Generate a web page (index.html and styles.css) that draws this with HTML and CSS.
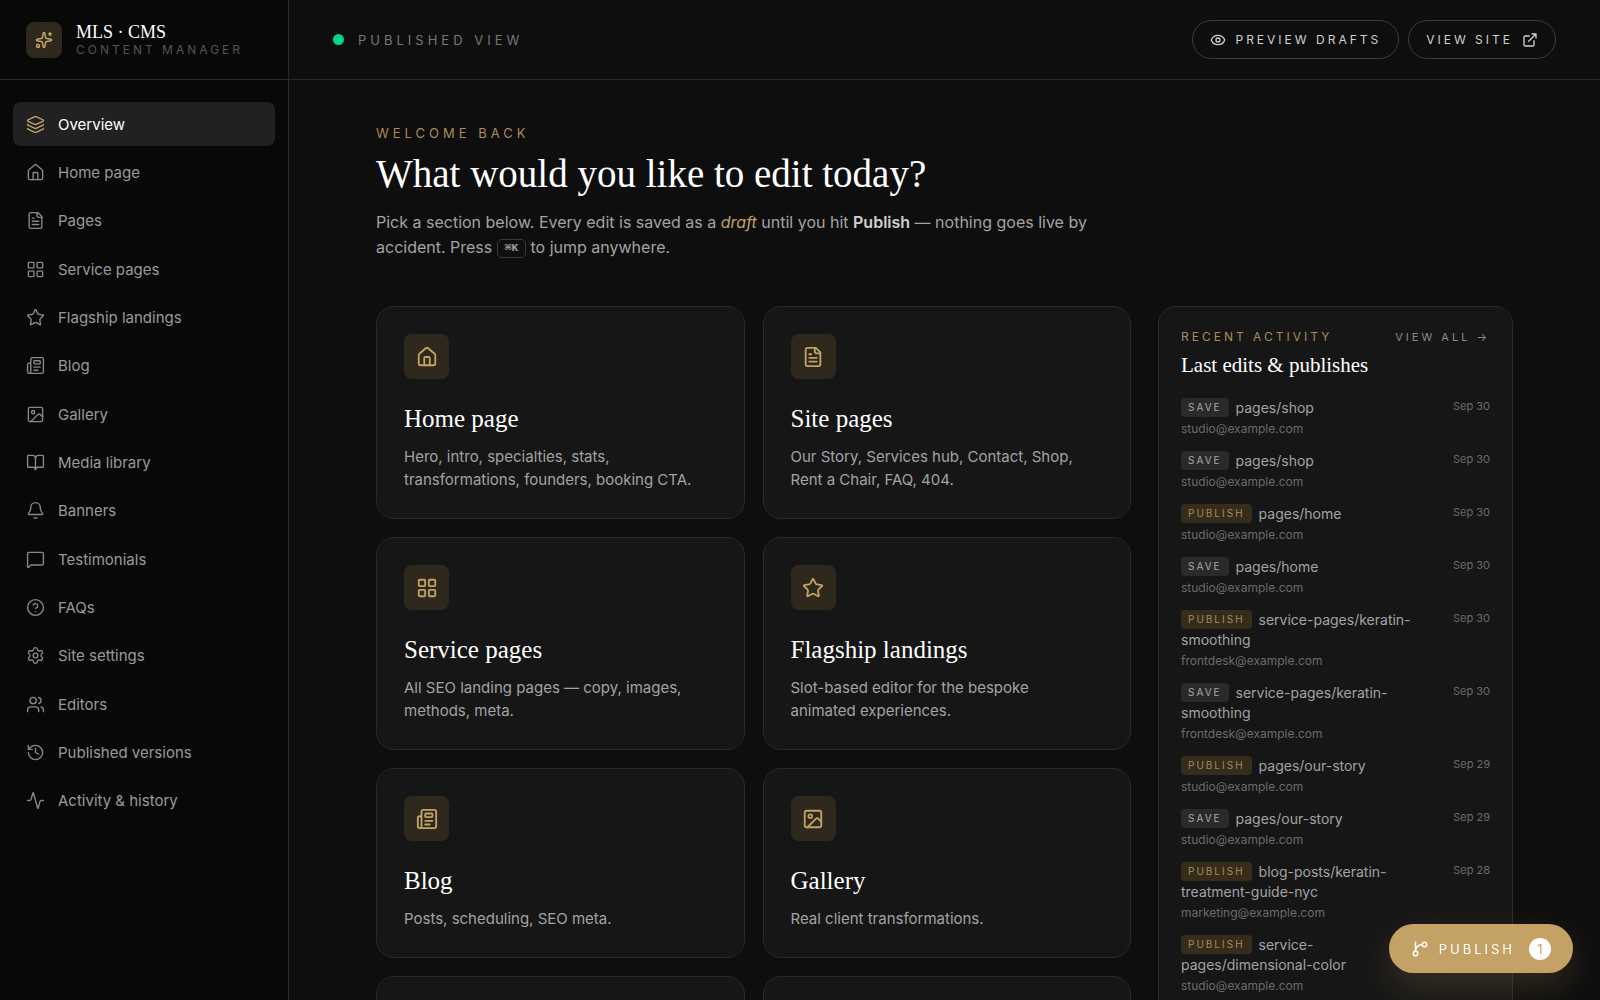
FILE: index.html
```html
<!DOCTYPE html>
<html lang="en">
<head>
  <meta charset="UTF-8">
  <meta name="viewport" content="width=device-width, initial-scale=1">
  <title>MLS · CMS</title>
  <link rel="stylesheet" href="styles.css">
</head>
<body>

<!-- icon sprite -->
<svg class="sprite" aria-hidden="true">
  <symbol id="i-sparkles" viewBox="0 0 24 24"><path d="M11.017 2.814a1 1 0 0 1 1.966 0l1.051 5.558a2 2 0 0 0 1.594 1.594l5.558 1.051a1 1 0 0 1 0 1.966l-5.558 1.051a2 2 0 0 0-1.594 1.594l-1.051 5.558a1 1 0 0 1-1.966 0l-1.051-5.558a2 2 0 0 0-1.594-1.594l-5.558-1.051a1 1 0 0 1 0-1.966l5.558-1.051a2 2 0 0 0 1.594-1.594zM20 2v4M22 4h-4"/><circle cx="4" cy="20" r="2"/></symbol>
  <symbol id="i-layers" viewBox="0 0 24 24"><path d="M12.83 2.18a2 2 0 0 0-1.66 0L2.6 6.08a1 1 0 0 0 0 1.83l8.58 3.91a2 2 0 0 0 1.66 0l8.58-3.9a1 1 0 0 0 0-1.83z"/><path d="M2 12a1 1 0 0 0 .58.91l8.6 3.91a2 2 0 0 0 1.65 0l8.58-3.9A1 1 0 0 0 22 12"/><path d="M2 17a1 1 0 0 0 .58.91l8.6 3.91a2 2 0 0 0 1.65 0l8.58-3.9A1 1 0 0 0 22 17"/></symbol>
  <symbol id="i-home" viewBox="0 0 24 24"><path d="M15 21v-8a1 1 0 0 0-1-1h-4a1 1 0 0 0-1 1v8"/><path d="M3 10a2 2 0 0 1 .709-1.528l7-6a2 2 0 0 1 2.582 0l7 6A2 2 0 0 1 21 10v9a2 2 0 0 1-2 2H5a2 2 0 0 1-2-2z"/></symbol>
  <symbol id="i-file" viewBox="0 0 24 24"><path d="M15 2H6a2 2 0 0 0-2 2v16a2 2 0 0 0 2 2h12a2 2 0 0 0 2-2V7z"/><path d="M14 2v4a2 2 0 0 0 2 2h4M10 9H8M16 13H8M16 17H8"/></symbol>
  <symbol id="i-grid" viewBox="0 0 24 24"><rect width="7" height="7" x="3" y="3" rx="1"/><rect width="7" height="7" x="14" y="3" rx="1"/><rect width="7" height="7" x="14" y="14" rx="1"/><rect width="7" height="7" x="3" y="14" rx="1"/></symbol>
  <symbol id="i-star" viewBox="0 0 24 24"><path d="M11.525 2.295a.53.53 0 0 1 .95 0l2.31 4.679a2.123 2.123 0 0 0 1.595 1.16l5.166.756a.53.53 0 0 1 .294.904l-3.736 3.638a2.123 2.123 0 0 0-.611 1.878l.882 5.14a.53.53 0 0 1-.771.56l-4.618-2.428a2.122 2.122 0 0 0-1.973 0L6.396 21.01a.53.53 0 0 1-.77-.56l.881-5.139a2.122 2.122 0 0 0-.611-1.879L2.16 9.795a.53.53 0 0 1 .294-.906l5.165-.755a2.122 2.122 0 0 0 1.597-1.16z"/></symbol>
  <symbol id="i-news" viewBox="0 0 24 24"><path d="M15 18h-5M18 14h-8M4 22h16a2 2 0 0 0 2-2V4a2 2 0 0 0-2-2H8a2 2 0 0 0-2 2v16a2 2 0 0 1-4 0v-9a2 2 0 0 1 2-2h2"/><rect width="8" height="4" x="10" y="6" rx="1"/></symbol>
  <symbol id="i-image" viewBox="0 0 24 24"><rect width="18" height="18" x="3" y="3" rx="2"/><circle cx="9" cy="9" r="2"/><path d="m21 15-3.086-3.086a2 2 0 0 0-2.828 0L6 21"/></symbol>
  <symbol id="i-book" viewBox="0 0 24 24"><path d="M12 7v14"/><path d="M3 18a1 1 0 0 1-1-1V4a1 1 0 0 1 1-1h5a4 4 0 0 1 4 4 4 4 0 0 1 4-4h5a1 1 0 0 1 1 1v13a1 1 0 0 1-1 1h-6a3 3 0 0 0-3 3 3 3 0 0 0-3-3z"/></symbol>
  <symbol id="i-bell" viewBox="0 0 24 24"><path d="M10.268 21a2 2 0 0 0 3.464 0"/><path d="M3.262 15.326A1 1 0 0 0 4 17h16a1 1 0 0 0 .74-1.673C19.41 13.956 18 12.499 18 8A6 6 0 0 0 6 8c0 4.499-1.411 5.956-2.738 7.326"/></symbol>
  <symbol id="i-message" viewBox="0 0 24 24"><path d="M22 17a2 2 0 0 1-2 2H6.828a2 2 0 0 0-1.414.586l-2.202 2.202A.71.71 0 0 1 2 21.286V5a2 2 0 0 1 2-2h16a2 2 0 0 1 2 2z"/></symbol>
  <symbol id="i-help" viewBox="0 0 24 24"><circle cx="12" cy="12" r="10"/><path d="M9.09 9a3 3 0 0 1 5.83 1c0 2-3 3-3 3M12 17h.01"/></symbol>
  <symbol id="i-settings" viewBox="0 0 24 24"><path d="M9.671 4.136a2.34 2.34 0 0 1 4.659 0 2.34 2.34 0 0 0 3.319 1.915 2.34 2.34 0 0 1 2.33 4.033 2.34 2.34 0 0 0 0 3.831 2.34 2.34 0 0 1-2.33 4.033 2.34 2.34 0 0 0-3.319 1.915 2.34 2.34 0 0 1-4.659 0 2.34 2.34 0 0 0-3.32-1.915 2.34 2.34 0 0 1-2.33-4.033 2.34 2.34 0 0 0 0-3.831A2.34 2.34 0 0 1 6.35 6.051a2.34 2.34 0 0 0 3.319-1.915"/><circle cx="12" cy="12" r="3"/></symbol>
  <symbol id="i-users" viewBox="0 0 24 24"><path d="M16 21v-2a4 4 0 0 0-4-4H6a4 4 0 0 0-4 4v2M16 3.128a4 4 0 0 1 0 7.744M22 21v-2a4 4 0 0 0-3-3.87"/><circle cx="9" cy="7" r="4"/></symbol>
  <symbol id="i-history" viewBox="0 0 24 24"><path d="M3 12a9 9 0 1 0 9-9 9.75 9.75 0 0 0-6.74 2.74L3 8"/><path d="M3 3v5h5M12 7v5l4 2"/></symbol>
  <symbol id="i-activity" viewBox="0 0 24 24"><path d="M22 12h-2.48a2 2 0 0 0-1.93 1.46l-2.35 8.36a.25.25 0 0 1-.48 0L9.24 2.18a.25.25 0 0 0-.48 0l-2.35 8.36A2 2 0 0 1 4.49 12H2"/></symbol>
  <symbol id="i-eye" viewBox="0 0 24 24"><path d="M2.062 12.348a1 1 0 0 1 0-.696 10.75 10.75 0 0 1 19.876 0 1 1 0 0 1 0 .696 10.75 10.75 0 0 1-19.876 0"/><circle cx="12" cy="12" r="3"/></symbol>
  <symbol id="i-external" viewBox="0 0 24 24"><path d="M15 3h6v6M10 14 21 3M18 13v6a2 2 0 0 1-2 2H5a2 2 0 0 1-2-2V8a2 2 0 0 1 2-2h6"/></symbol>
  <symbol id="i-branch" viewBox="0 0 24 24"><path d="M15 6a9 9 0 0 0-9 9V3"/><circle cx="18" cy="6" r="3"/><circle cx="6" cy="18" r="3"/></symbol>
</svg>

<div class="app">
  <aside class="sidebar">
    <div class="brand">
      <span class="brand-mark"><svg class="icon"><use href="#i-sparkles"/></svg></span>
      <div>
        <div class="brand-name">MLS · CMS</div>
        <div class="brand-sub">Content manager</div>
      </div>
    </div>
    <nav>
      <ul class="nav">
        <li><a class="active" href="#overview"><svg class="icon"><use href="#i-layers"/></svg>Overview</a></li>
        <li><a href="#home"><svg class="icon"><use href="#i-home"/></svg>Home page</a></li>
        <li><a href="#pages"><svg class="icon"><use href="#i-file"/></svg>Pages</a></li>
        <li><a href="#services"><svg class="icon"><use href="#i-grid"/></svg>Service pages</a></li>
        <li><a href="#landings"><svg class="icon"><use href="#i-star"/></svg>Flagship landings</a></li>
        <li><a href="#blog"><svg class="icon"><use href="#i-news"/></svg>Blog</a></li>
        <li><a href="#gallery"><svg class="icon"><use href="#i-image"/></svg>Gallery</a></li>
        <li><a href="#media"><svg class="icon"><use href="#i-book"/></svg>Media library</a></li>
        <li><a href="#banners"><svg class="icon"><use href="#i-bell"/></svg>Banners</a></li>
        <li><a href="#testimonials"><svg class="icon"><use href="#i-message"/></svg>Testimonials</a></li>
        <li><a href="#faqs"><svg class="icon"><use href="#i-help"/></svg>FAQs</a></li>
        <li><a href="#settings"><svg class="icon"><use href="#i-settings"/></svg>Site settings</a></li>
        <li><a href="#editors"><svg class="icon"><use href="#i-users"/></svg>Editors</a></li>
        <li><a href="#versions"><svg class="icon"><use href="#i-history"/></svg>Published versions</a></li>
        <li><a href="#activity"><svg class="icon"><use href="#i-activity"/></svg>Activity &amp; history</a></li>
      </ul>
    </nav>
  </aside>

  <div class="content">
    <header class="topbar">
      <div class="status"><span class="dot"></span>Published view</div>
      <div class="actions">
        <button class="pill" type="button"><svg class="icon"><use href="#i-eye"/></svg>Preview drafts</button>
        <a class="pill" href="#site">View site<svg class="icon"><use href="#i-external"/></svg></a>
      </div>
    </header>

    <main>
      <div class="page">
        <p class="eyebrow">Welcome back</p>
        <h1>What would you like to edit today?</h1>
        <p class="intro">Pick a section below. Every edit is saved as a <em>draft</em> until you hit <strong>Publish</strong> — nothing goes live by accident. Press <kbd>⌘K</kbd> to jump anywhere.</p>

        <div class="columns">
          <div class="cards">
            <a class="card" href="#home">
              <span class="card-icon"><svg class="icon"><use href="#i-home"/></svg></span>
              <h2>Home page</h2>
              <p>Hero, intro, specialties, stats, transformations, founders, booking CTA.</p>
            </a>
            <a class="card" href="#pages">
              <span class="card-icon"><svg class="icon"><use href="#i-file"/></svg></span>
              <h2>Site pages</h2>
              <p>Our Story, Services hub, Contact, Shop, Rent a Chair, FAQ, 404.</p>
            </a>
            <a class="card" href="#services">
              <span class="card-icon"><svg class="icon"><use href="#i-grid"/></svg></span>
              <h2>Service pages</h2>
              <p>All SEO landing pages — copy, images, methods, meta.</p>
            </a>
            <a class="card" href="#landings">
              <span class="card-icon"><svg class="icon"><use href="#i-star"/></svg></span>
              <h2>Flagship landings</h2>
              <p>Slot-based editor for the bespoke animated experiences.</p>
            </a>
            <a class="card" href="#blog">
              <span class="card-icon"><svg class="icon"><use href="#i-news"/></svg></span>
              <h2>Blog</h2>
              <p>Posts, scheduling, SEO meta.</p>
            </a>
            <a class="card" href="#gallery">
              <span class="card-icon"><svg class="icon"><use href="#i-image"/></svg></span>
              <h2>Gallery</h2>
              <p>Real client transformations.</p>
            </a>
            <a class="card" href="#media">
              <span class="card-icon"><svg class="icon"><use href="#i-book"/></svg></span>
              <h2>Media library</h2>
            </a>
            <a class="card" href="#banners">
              <span class="card-icon"><svg class="icon"><use href="#i-bell"/></svg></span>
              <h2>Banners</h2>
            </a>
          </div>

          <section class="recent">
            <div class="recent-head">
              <p class="label">Recent activity</p>
              <a href="#activity">View all →</a>
            </div>
            <h2>Last edits &amp; publishes</h2>
            <ul class="log">
              <li><div><p class="path"><span class="tag">Save</span>pages/shop</p><p class="who">studio@example.com</p></div><time>Sep 30</time></li>
              <li><div><p class="path"><span class="tag">Save</span>pages/shop</p><p class="who">studio@example.com</p></div><time>Sep 30</time></li>
              <li><div><p class="path"><span class="tag gold">Publish</span>pages/home</p><p class="who">studio@example.com</p></div><time>Sep 30</time></li>
              <li><div><p class="path"><span class="tag">Save</span>pages/home</p><p class="who">studio@example.com</p></div><time>Sep 30</time></li>
              <li><div><p class="path"><span class="tag gold">Publish</span>service-pages/keratin-smoothing</p><p class="who">frontdesk@example.com</p></div><time>Sep 30</time></li>
              <li><div><p class="path"><span class="tag">Save</span>service-pages/keratin-smoothing</p><p class="who">frontdesk@example.com</p></div><time>Sep 30</time></li>
              <li><div><p class="path"><span class="tag gold">Publish</span>pages/our-story</p><p class="who">studio@example.com</p></div><time>Sep 29</time></li>
              <li><div><p class="path"><span class="tag">Save</span>pages/our-story</p><p class="who">studio@example.com</p></div><time>Sep 29</time></li>
              <li><div><p class="path"><span class="tag gold">Publish</span>blog-posts/keratin-treatment-guide-nyc</p><p class="who">marketing@example.com</p></div><time>Sep 28</time></li>
              <li><div><p class="path"><span class="tag gold">Publish</span>service-pages/dimensional-color</p><p class="who">studio@example.com</p></div><time>Sep 28</time></li>
            </ul>
          </section>
        </div>
      </div>
    </main>
  </div>
</div>

<button class="publish" type="button"><svg class="icon"><use href="#i-branch"/></svg>Publish<span class="count">1</span></button>

</body>
</html>
```
FILE: styles.css
```css
:root {
  --gold: #c4a265;
  --gold-soft: #2f281d;
  --line: #2a2a2a;
  --serif: "Liberation Serif", "Times New Roman", serif;
  --sans: Inter, "Open Sans", sans-serif;
}
* { box-sizing: border-box; margin: 0; padding: 0; }
body { font-family: var(--sans); font-size: 15px; background: #0e0e0e; color: #a3a3a3; }
a { color: inherit; text-decoration: none; }
ul { list-style: none; }
button { font-family: inherit; cursor: pointer; }
.sprite { display: none; }
.icon { width: 18px; height: 18px; flex: none; fill: none; stroke: currentColor; stroke-width: 2; stroke-linecap: round; stroke-linejoin: round; }

.app { display: flex; height: 100vh; overflow: hidden; }
.content { flex: 1; min-width: 0; display: flex; flex-direction: column; }
main { flex: 1; overflow-y: auto; scrollbar-width: none; }

/* sidebar */
.sidebar { width: 289px; flex: none; background: #080808; border-right: 1px solid var(--line); }
.brand { display: flex; align-items: center; gap: 14px; height: 80px; padding: 0 26px; border-bottom: 1px solid var(--line); }
.brand-mark { display: grid; place-items: center; width: 36px; height: 36px; border-radius: 8px; background: var(--gold-soft); color: var(--gold); }
.brand-name { font-family: var(--serif); font-size: 18px; line-height: 20px; color: #fff; }
.brand-sub { font-size: 12px; line-height: 16px; letter-spacing: 3px; text-transform: uppercase; color: #555; white-space: nowrap; }
.nav { padding: 22px 13px; }
.nav li { margin-bottom: 4px; }
.nav li:nth-child(3n) { margin-bottom: 5px; }
.nav a { display: flex; align-items: center; gap: 13px; height: 44px; padding: 0 13px; border-radius: 8px; color: #9a9a9a; }
.nav .icon { width: 19px; height: 19px; stroke-width: 1.75; color: #888; }
.nav .active { background: #212121; color: #fff; }
.nav .active .icon { color: var(--gold); }

/* top bar */
.topbar { display: flex; align-items: center; justify-content: space-between; height: 80px; flex: none; padding: 0 44px; border-bottom: 1px solid var(--line); }
.status { display: flex; align-items: center; gap: 14px; font-size: 13px; letter-spacing: 4px; text-transform: uppercase; color: #777; }
.dot { width: 11px; height: 11px; border-radius: 50%; background: #00d492; }
.actions { display: flex; gap: 9px; }
.pill { display: flex; align-items: center; gap: 9px; height: 39px; padding: 0 17px; border: 1px solid #3c3c3c; border-radius: 20px; background: none; color: #d0d0d0; font-size: 12px; letter-spacing: 3px; text-transform: uppercase; }
.pill .icon { width: 16px; height: 16px; }

/* page */
.page { max-width: 1225px; margin: 0 auto; padding: 43px 44px; }
.eyebrow { font-size: 13px; line-height: 20px; letter-spacing: 4px; text-transform: uppercase; color: #a98b57; }
h1 { margin-top: 5px; font-family: var(--serif); font-weight: 400; font-size: 39px; line-height: 52px; color: #fff; }
.intro { max-width: 745px; margin-top: 10px; font-size: 16px; line-height: 25px; }
.intro em { color: var(--gold); }
.intro strong { color: #d0d0d0; font-weight: 600; }
kbd { display: inline-block; padding: 0 7px; border: 1px solid #3a3a3a; border-radius: 5px; font-family: "Liberation Mono", "DejaVu Sans Mono", monospace; font-size: 11px; font-weight: 700; line-height: 17px; vertical-align: middle; }
.columns { display: grid; grid-template-columns: minmax(0, 1fr) 355px; align-items: start; gap: 27px; margin-top: 46px; }

.cards { display: grid; grid-template-columns: 1fr 1fr; gap: 18px; }
.card { padding: 27px; background: #161616; border: 1px solid var(--line); border-radius: 18px; }
.card-icon { display: grid; place-items: center; width: 45px; height: 45px; border-radius: 8px; background: var(--gold-soft); color: var(--gold); }
.card-icon .icon { width: 22px; height: 22px; }
.card h2 { margin-top: 22px; font-family: var(--serif); font-weight: 400; font-size: 25px; line-height: 35px; color: #fff; }
.card p { max-width: 300px; margin-top: 9px; line-height: 23px; }

/* recent activity */
.recent { padding: 19px 22px; background: #161616; border: 1px solid var(--line); border-radius: 18px; }
.recent-head { display: flex; justify-content: space-between; font-size: 12px; line-height: 22px; letter-spacing: 3px; text-transform: uppercase; }
.label { color: #a98b57; }
.recent-head a { font-size: 11px; color: #8a8a8a; }
.recent h2 { font-family: var(--serif); font-weight: 400; font-size: 21px; line-height: 34px; color: #fff; }
.log { margin-top: 16px; }
.log li { display: flex; justify-content: space-between; gap: 40px; margin-bottom: 14px; }
.path { font-size: 14px; line-height: 20px; }
.tag { display: inline-block; margin-right: 7px; padding: 0 7px; border-radius: 4px; background: #2a2a2a; color: #a8a8a8; font-size: 10px; line-height: 19px; letter-spacing: 2px; text-transform: uppercase; vertical-align: top; }
.tag.gold { background: #352c1c; color: #a98b57; }
.who { margin-top: 2px; font-size: 12px; line-height: 17px; color: #6b6b6b; }
.log time { flex: none; font-size: 11px; line-height: 17px; color: #6b6b6b; }

.publish { position: fixed; right: 27px; bottom: 27px; display: flex; align-items: center; gap: 10px; height: 49px; padding: 0 22px; border: 0; border-radius: 25px; background: var(--gold); color: #fff; font-size: 13px; letter-spacing: 3px; text-transform: uppercase; box-shadow: 0 14px 36px rgba(196, 162, 101, .2); }
.count { display: grid; place-items: center; width: 22px; height: 22px; margin-left: 4px; border-radius: 50%; background: #fff; color: var(--gold); letter-spacing: 0; }
```
